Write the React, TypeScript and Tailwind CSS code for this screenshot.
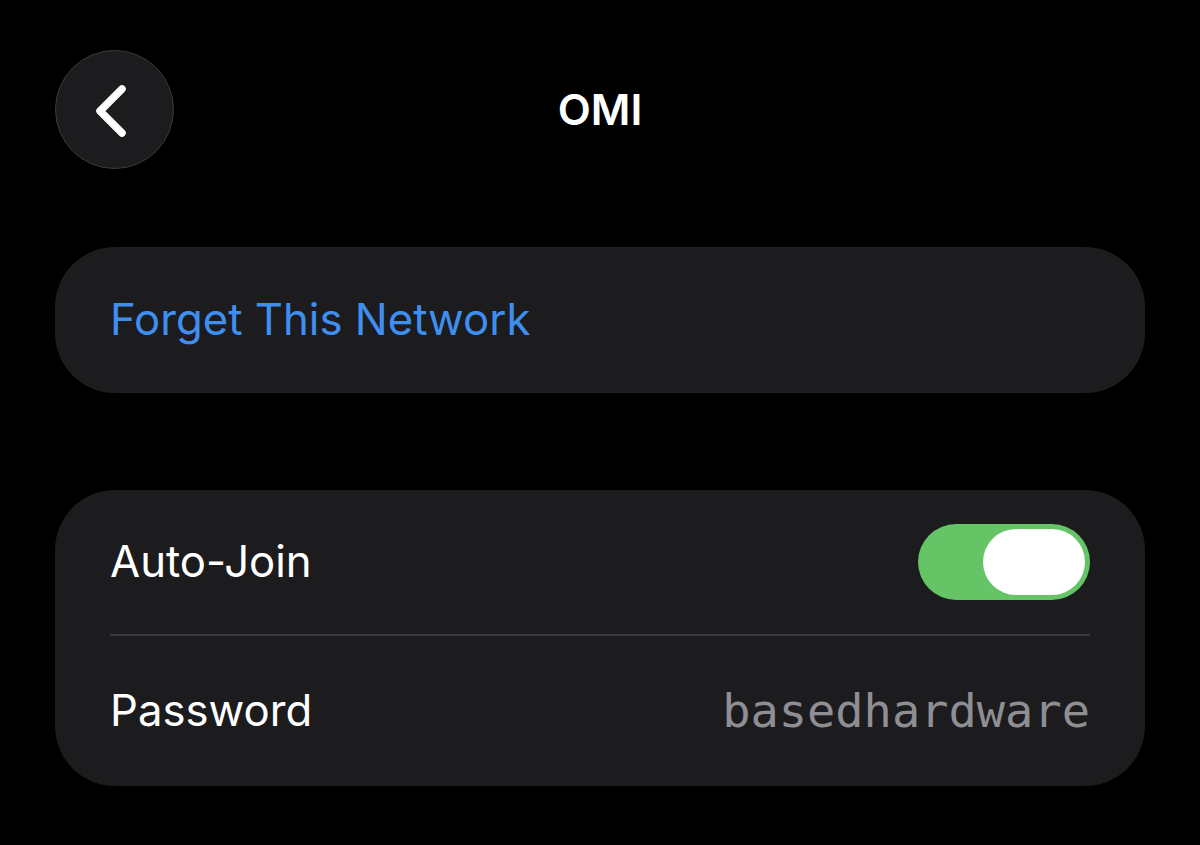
import { useState } from "react"

function BackButton() {
  return (
    <button className="w-[119px] h-[119px] rounded-full bg-[#1c1c1e] border border-[#3a3a3c] flex items-center justify-center">
      <svg width="40" height="60" viewBox="0 0 40 60" fill="none">
        <path d="M27 9 L5 31 L27 53" stroke="white" strokeWidth="7.5" strokeLinecap="round" strokeLinejoin="round" />
      </svg>
    </button>
  )
}

function Toggle({ on, onChange }: { on: boolean; onChange: () => void }) {
  return (
    <button
      onClick={onChange}
      className={`w-[172px] h-[76px] rounded-full p-[5px] flex items-center ${on ? "bg-[#65c466] justify-end" : "bg-[#39393d] justify-start"}`}
    >
      <span className="w-[102px] h-[66px] rounded-full bg-white block" />
    </button>
  )
}

export default function App() {
  const [autoJoin, setAutoJoin] = useState(true)

  return (
    <div className="w-[1200px] h-[845px] bg-black px-[55px] pt-[50px] font-['Inter',sans-serif] overflow-hidden">
      <div className="relative flex items-center h-[119px]">
        <BackButton />
        <h1 className="absolute left-0 right-0 text-center text-white text-[43px] font-semibold pointer-events-none">OMI</h1>
      </div>

      <div className="mt-[78px] h-[146px] rounded-[60px] bg-[#1c1c1e] flex items-center px-[55px]">
        <span className="text-[#3f8ff0] text-[43.7px]">Forget This Network</span>
      </div>

      <div className="mt-[97px] rounded-[60px] bg-[#1c1c1e] px-[55px]">
        <div className="h-[144px] flex items-center justify-between">
          <span className="text-white text-[43.7px]">Auto-Join</span>
          <Toggle on={autoJoin} onChange={() => setAutoJoin(!autoJoin)} />
        </div>
        <div className="h-[2px] bg-[#3a3a3c]" />
        <div className="h-[150px] flex items-center justify-between">
          <span className="text-white text-[43.7px]">Password</span>
          <span className="text-[#8e8e93] text-[47px] font-['DejaVu_Sans_Mono',monospace]">basedhardware</span>
        </div>
      </div>
    </div>
  )
}
